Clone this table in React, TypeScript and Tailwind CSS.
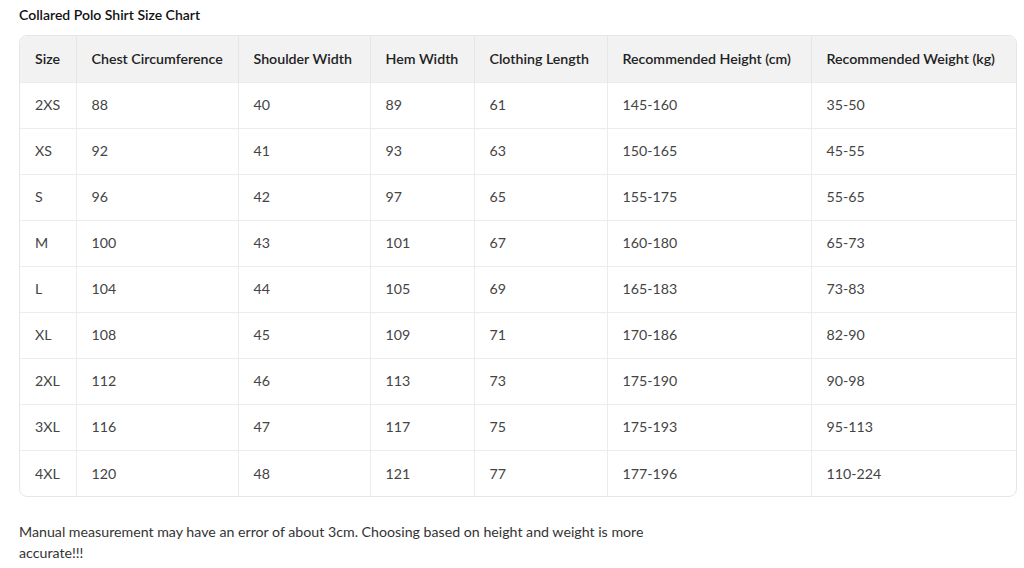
const headers = [
  "Size",
  "Chest Circumference",
  "Shoulder Width",
  "Hem Width",
  "Clothing Length",
  "Recommended Height (cm)",
  "Recommended Weight (kg)",
];

const widths = ["w-[56px]", "w-[162px]", "w-[132px]", "w-[104px]", "w-[133px]", "w-[204px]", "w-auto"];

const rows = [
  ["2XS", "88", "40", "89", "61", "145-160", "35-50"],
  ["XS", "92", "41", "93", "63", "150-165", "45-55"],
  ["S", "96", "42", "97", "65", "155-175", "55-65"],
  ["M", "100", "43", "101", "67", "160-180", "65-73"],
  ["L", "104", "44", "105", "69", "165-183", "73-83"],
  ["XL", "108", "45", "109", "71", "170-186", "82-90"],
  ["2XL", "112", "46", "113", "73", "175-190", "90-98"],
  ["3XL", "116", "47", "117", "75", "175-193", "95-113"],
  ["4XL", "120", "48", "121", "77", "177-196", "110-224"],
];

export default function App() {
  return (
    <div className="min-h-[568px] bg-white px-[19px] pt-[6px] font-['Lato',sans-serif] text-[#333]">
      <h2 className="text-[14px] font-semibold leading-[18px] text-[#111]">Collared Polo Shirt Size Chart</h2>

      <div className="mt-[11px] w-[998px] overflow-hidden rounded-[8px] border border-[#e6e6e6]">
        <table className="w-full table-fixed border-collapse text-[14.2px]">
          <thead>
            <tr className="h-[46px] bg-[#f2f2f2]">
              {headers.map((h, i) => (
                <th
                  key={h}
                  className={`${widths[i]} whitespace-nowrap border-l border-[#e6e6e6] px-[15px] text-left font-semibold text-[#222] first:border-l-0`}
                >
                  {h}
                </th>
              ))}
            </tr>
          </thead>
          <tbody>
            {rows.map((row) => (
              <tr key={row[0]} className="h-[46px] border-t border-[#ececec]">
                {row.map((cell, i) => (
                  <td key={i} className="border-l border-[#ececec] px-[15px] text-[#444] first:border-l-0">
                    {cell}
                  </td>
                ))}
              </tr>
            ))}
          </tbody>
        </table>
      </div>

      <p className="mt-[24px] max-w-[640px] text-[14.2px] leading-[21px] text-[#333]">
        Manual measurement may have an error of about 3cm. Choosing based on height and weight is more accurate!!!
      </p>
    </div>
  );
}
